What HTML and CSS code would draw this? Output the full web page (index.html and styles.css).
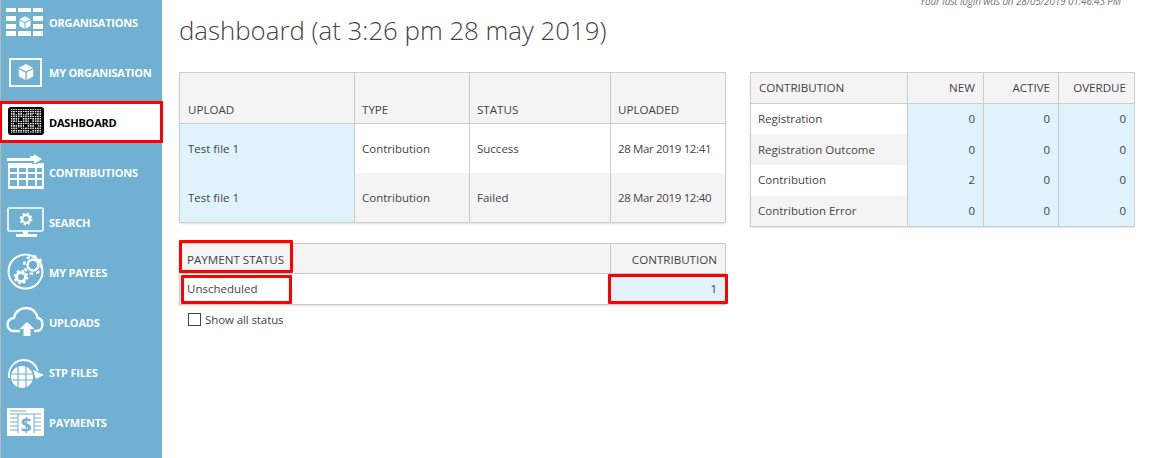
FILE: index.html
```html
<!DOCTYPE html>
<html lang="en">
<head>
<meta charset="utf-8">
<title>dashboard</title>
<link rel="stylesheet" href="styles.css">
</head>
<body>
<svg class="defs" width="0" height="0" aria-hidden="true">
  <defs>
    <symbol id="gear" viewBox="-10 -10 20 20">
      <circle r="5.6" fill="none" stroke="currentColor" stroke-width="3.4"/>
      <circle r="7.7" fill="none" stroke="currentColor" stroke-width="3" stroke-dasharray="3.05 3"/>
    </symbol>
    <symbol id="cube" viewBox="0 0 20 20">
      <path d="M10 1 18 5.200 10 9.400 2 5.200Z" fill="currentColor"/>
      <path d="M2 6.800 9.200 10.600V19L2 15Z M18 6.800 10.800 10.600V19L18 15Z" fill="currentColor"/>
    </symbol>
    <pattern id="dots" width="2.400" height="2.400" patternUnits="userSpaceOnUse">
      <rect width="1.500" height="1.500" fill="#fff"/>
    </pattern>
  </defs>
</svg>
<aside class="sidebar">
  <nav class="nav">
    <a class="nav-item">
      <svg class="icon" viewBox="0 0 38 32"><path fill="currentColor" d="M0 2h10v4H0zM12 2h13v4H12zM27 2h10v4H27zM0 10h10v5H0zM27 10h10v5H27zM0 18h10v5H0zM27 18h10v5H27zM0 25h10v5H0zM12 25h13v5H12zM27 25h10v5H27z"/><use href="#cube" x="12" y="9" width="14" height="15"/></svg>
      <span>ORGANISATIONS</span>
    </a>
    <a class="nav-item">
      <svg class="icon" viewBox="0 0 38 32"><rect x="4" y="3" width="31" height="27" fill="none" stroke="currentColor" stroke-width="2"/><use href="#cube" x="11" y="7" width="18" height="18"/></svg>
      <span>MY ORGANISATION</span>
    </a>
    <a class="nav-item is-active">
      <svg class="icon" viewBox="0 0 38 32"><rect x="2" y="1" width="36" height="28" rx="3" fill="#000"/><rect x="4.500" y="3" width="31" height="24" fill="url(#dots)"/><path d="M9 6h3v2H9zM17 6h3v2h-3zM27 8h3v2h-3zM13 12h3v3h-3zM23 13h3v3h-3zM8 17h3v2H8zM18 18h3v3h-3zM29 19h3v2h-3zM12 22h3v2h-3zM23 23h3v2h-3z" fill="#000"/></svg>
      <span>DASHBOARD</span>
    </a>
    <a class="nav-item">
      <svg class="icon" viewBox="0 0 38 32"><path fill="currentColor" d="M1 2h23V0h4v-2l8 5-8 5V5H1z"/><path fill="currentColor" fill-rule="evenodd" d="M2 7h24v1h6V7h5a1 1 0 0 1 1 1v24a1 1 0 0 1-1 1H3a1 1 0 0 1-1-1zM4 12v4h7v-4zM13 12v4h7v-4zM22 12v4h7v-4zM31 12v4h5v-4zM4 18v4h7v-4zM13 18v4h7v-4zM22 18v4h7v-4zM31 18v4h5v-4zM4 24v6h7v-6zM13 24v6h7v-6zM22 24v6h7v-6zM31 24v6h5v-6z"/></svg>
      <span>CONTRIBUTIONS</span>
    </a>
    <a class="nav-item">
      <svg class="icon" viewBox="0 0 38 32"><rect x="2" y="2" width="35" height="23" rx="1" fill="none" stroke="currentColor" stroke-width="1.600"/><path fill="currentColor" d="M17 25h5v3h-5zM10 28h21v3H10z"/><use href="#gear" x="13" y="6" width="14" height="14"/></svg>
      <span>SEARCH</span>
    </a>
    <a class="nav-item">
      <svg class="icon icon-round" viewBox="0 0 38 38"><circle cx="19.500" cy="18.500" r="17" fill="none" stroke="currentColor" stroke-width="2"/><use href="#gear" x="7" y="16" width="16" height="16"/><circle cx="27" cy="12" r="5.500" fill="none" stroke="currentColor" stroke-width="2.600"/><circle cx="27" cy="12" r="8.800" fill="none" stroke="currentColor" stroke-width="2.400" stroke-dasharray="3.400 3.500"/></svg>
      <span>MY PAYEES</span>
    </a>
    <a class="nav-item">
      <svg class="icon" viewBox="0 0 38 32"><path d="M14 25H8C3 25 1.500 21 1.500 18.500 1.500 14.500 5 12 8 12 9 6 14 2 20 2c7 0 11 5 11.500 10 3.500.5 5 3.500 5 6.500 0 3.500-2.500 6.500-6.500 6.500H28" fill="none" stroke="currentColor" stroke-width="2.400"/><path fill="currentColor" d="M21 16l7.500 7H24.500v7h-7v-7H13.500z"/></svg>
      <span>UPLOADS</span>
    </a>
    <a class="nav-item">
      <svg class="icon" viewBox="0 0 38 32"><path fill="none" stroke="currentColor" stroke-width="1.800" d="M3 22C2 10 10 4 18 4c6 0 11 3 14 11"/><circle cx="16" cy="21" r="11" fill="currentColor"/><path stroke="#70b0d2" stroke-width="1.200" d="M4 18h24M4 24h24M12 9v24M20 9v24"/><path fill="currentColor" d="M27 14l11 5-8 4z"/></svg>
      <span>STP FILES</span>
    </a>
    <a class="nav-item">
      <svg class="icon" viewBox="0 0 38 32"><rect x="1" y="2" width="37" height="28" rx="1" fill="currentColor"/><path stroke="#70b0d2" stroke-width="1" fill="none" d="M4 5h16M4 8h31M4 12h8M4 16h8M4 20h8M4 24h8M28 12h7M28 16h7M28 20h7M28 24h7M12 8v19M28 8v19"/><text class="icon-dollar" x="20" y="26" text-anchor="middle">$</text></svg>
      <span>PAYMENTS</span>
    </a>
  </nav>
</aside>
<main class="main">
  <p class="last-login">Your last login was on 28/05/2019 01:46:43 PM</p>
  <h1 class="title">dashboard (at 3:26 pm 28 may 2019)</h1>
  <div class="panels">
    <div class="col">
      <div class="card">
        <table class="grid uploads">
          <thead>
            <tr><th class="c-upload">UPLOAD</th><th class="c-type">TYPE</th><th class="c-status">STATUS</th><th class="c-date">UPLOADED</th></tr>
          </thead>
          <tbody>
            <tr><td class="hi">Test file 1</td><td>Contribution</td><td>Success</td><td class="when">28 Mar 2019 12:41</td></tr>
            <tr class="alt"><td class="hi">Test file 1</td><td>Contribution</td><td>Failed</td><td class="when">28 Mar 2019 12:40</td></tr>
          </tbody>
        </table>
      </div>
      <div class="card">
        <table class="grid payment">
          <thead>
            <tr><th class="mark mark-head">PAYMENT STATUS</th><th class="c-date num">CONTRIBUTION</th></tr>
          </thead>
          <tbody>
            <tr><td class="mark mark-name">Unscheduled</td><td class="hi num mark mark-val">1</td></tr>
          </tbody>
        </table>
      </div>
      <label class="check"><span class="box"></span>Show all status</label>
    </div>
    <div class="col">
      <div class="card">
        <table class="grid summary">
          <thead>
            <tr><th class="c-name">CONTRIBUTION</th><th class="c-new num">NEW</th><th class="c-num num">ACTIVE</th><th class="c-num2 num">OVERDUE</th></tr>
          </thead>
          <tbody>
            <tr><td>Registration</td><td class="hi num">0</td><td class="hi num">0</td><td class="hi num">0</td></tr>
            <tr class="alt"><td>Registration Outcome</td><td class="hi num">0</td><td class="hi num">0</td><td class="hi num">0</td></tr>
            <tr><td>Contribution</td><td class="hi num">2</td><td class="hi num">0</td><td class="hi num">0</td></tr>
            <tr class="alt"><td>Contribution Error</td><td class="hi num">0</td><td class="hi num">0</td><td class="hi num">0</td></tr>
          </tbody>
        </table>
      </div>
    </div>
  </div>
</main>
</body>
</html>
```
FILE: styles.css
```css
*, *::after { box-sizing: border-box; }
html, body { margin: 0; height: 100%; overflow: hidden; }
body {
  display: flex;
  background: #fff;
  color: #444;
  font-family: "Open Sans", "Noto Sans", "Liberation Sans", sans-serif;
  font-size: 11.5px;
}
.defs { position: absolute; }
.sidebar {
  flex: 0 0 162px;
  height: 458px;
  background: #70b0d2;
  border-left: 1px solid #b5b5b5;
}
.nav { display: flex; flex-direction: column; gap: 10px; padding-top: 2px; }
.nav-item {
  display: flex;
  align-items: center;
  gap: 5px;
  height: 40px;
  padding-left: 5px;
  color: #fff;
  font-size: 11px;
  font-weight: 700;
  letter-spacing: -0.2px;
}
.nav-item.is-active {
  color: #000;
  background: #fff;
  outline: 3px solid #f00;
  outline-offset: -2px;
  width: 162px;
  margin-left: -1px;
  padding-left: 6px;
}
.icon { flex: 0 0 38px; width: 38px; height: 32px; overflow: visible; }
.icon-round { height: 38px; }
.icon-dollar { font: 700 19px "Open Sans", sans-serif; fill: #70b0d2; }
.main { flex: 1; min-width: 0; padding: 0 28px 0 17px; }
.last-login {
  margin: -6px 0 0;
  text-align: right;
  font-size: 10px;
  letter-spacing: -0.15px;
  font-style: italic;
  color: #777;
  line-height: 14px;
}
.title {
  margin: 4px 0 24px;
  font-size: 25.8px;
  font-weight: 300;
  line-height: 36px;
  color: #444;
}
.panels { display: grid; grid-template-columns: 547px 384px; column-gap: 24px; align-items: start; }
.col { display: flex; flex-direction: column; gap: 20px; }
.card { border-radius: 3px; box-shadow: 0 1px 2px rgba(0,0,0,.12); }
.grid { width: 100%; border-collapse: collapse; table-layout: fixed; }
.grid th, .grid td { border: 1px solid #ccc; padding: 0 7px; text-align: left; font-weight: 400; white-space: nowrap; }
.grid th { background: #f4f4f4; height: 30px; font-size: 11.6px; padding-top: 1px; }
.grid td { height: 30.500px; }
.grid .num { text-align: right; padding-right: 8px; }
.grid .alt td { background: #f4f4f4; }
.grid td.hi, .grid .alt td.hi { background: #e0f2fa; }
.uploads th { height: 51px; vertical-align: bottom; padding-bottom: 6px; }
.uploads td { height: 49.500px; }
.uploads td:first-child, .uploads th:first-child { padding-left: 8px; }
.uploads .when { letter-spacing: -0.35px; }
.uploads tbody td { border-top: 0; border-bottom: 0; }
.uploads tbody tr:last-child td { border-bottom: 1px solid #ccc; }
.c-upload { width: 175px; }
.c-type { width: 115px; }
.c-status { width: 141px; }
.c-date { width: 115px; }
.c-name { width: 157px; }
.c-new { width: 76px; }
.c-num { width: 75px; }
.c-num2 { width: 76px; }
.summary th { height: 31px; padding-top: 0; padding-bottom: 1px; }
.summary th:first-child { padding-left: 8px; }
.summary td { height: 30.700px; padding-bottom: 1px; }
.summary tbody td { border-top: 0; border-bottom: 0; }
.summary tbody tr:last-child td { border-bottom: 1px solid #ccc; }
.mark { position: relative; }
.mark::after { content: ""; position: absolute; border: 3px solid #f00; border-radius: 1px; pointer-events: none; }
.mark-head::after { left: -1px; top: -4px; width: 114px; height: 33px; }
.mark-name::after { left: 1px; top: 1px; width: 111px; height: 29px; }
.mark-val::after { left: -3px; top: 0; width: 120px; height: 30px; }
.check { display: flex; align-items: center; gap: 4px; margin: -13px 0 0 9px; letter-spacing: -0.1px; }
.box { width: 13px; height: 13px; border: 1px solid #444; background: #fff; }
```
